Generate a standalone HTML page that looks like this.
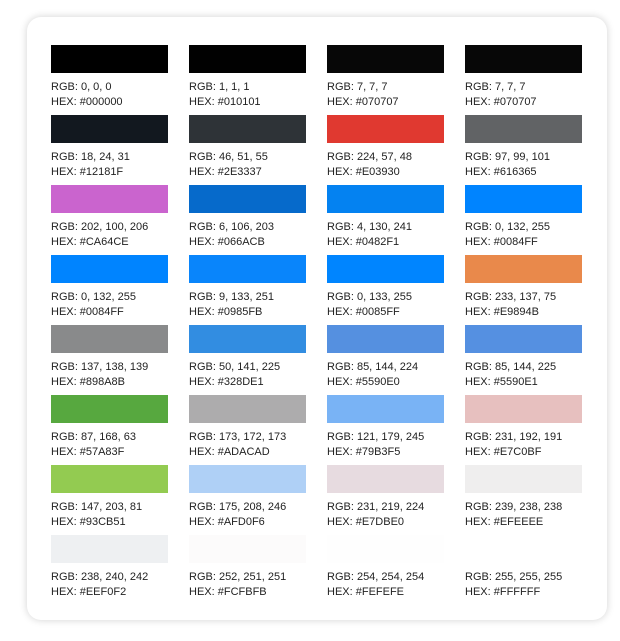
<!DOCTYPE html>
<html><head><meta charset="utf-8"><style>
body{margin:0;background:#fff;width:620px;height:641px;overflow:hidden;font-family:"Liberation Sans",Arial,sans-serif}
.card{position:absolute;left:27px;top:17px;width:580px;height:603px;background:#fff;border-radius:14px;box-shadow:0 0 8px rgba(0,0,0,.18)}
.grid{position:absolute;left:24px;top:28px;display:grid;grid-template-columns:repeat(4,117px);column-gap:21px;row-gap:0}
.c{height:70px}
.s{height:28px}
.t{font-size:11px;line-height:15px;color:#222;margin-top:7px}
</style></head><body><div class="card"><div class="grid">
<div class="c"><div class="s" style="background:#000000"></div><div class="t">RGB: 0, 0, 0<br>HEX: #000000</div></div>
<div class="c"><div class="s" style="background:#010101"></div><div class="t">RGB: 1, 1, 1<br>HEX: #010101</div></div>
<div class="c"><div class="s" style="background:#070707"></div><div class="t">RGB: 7, 7, 7<br>HEX: #070707</div></div>
<div class="c"><div class="s" style="background:#070707"></div><div class="t">RGB: 7, 7, 7<br>HEX: #070707</div></div>
<div class="c"><div class="s" style="background:#12181F"></div><div class="t">RGB: 18, 24, 31<br>HEX: #12181F</div></div>
<div class="c"><div class="s" style="background:#2E3337"></div><div class="t">RGB: 46, 51, 55<br>HEX: #2E3337</div></div>
<div class="c"><div class="s" style="background:#E03930"></div><div class="t">RGB: 224, 57, 48<br>HEX: #E03930</div></div>
<div class="c"><div class="s" style="background:#616365"></div><div class="t">RGB: 97, 99, 101<br>HEX: #616365</div></div>
<div class="c"><div class="s" style="background:#CA64CE"></div><div class="t">RGB: 202, 100, 206<br>HEX: #CA64CE</div></div>
<div class="c"><div class="s" style="background:#066ACB"></div><div class="t">RGB: 6, 106, 203<br>HEX: #066ACB</div></div>
<div class="c"><div class="s" style="background:#0482F1"></div><div class="t">RGB: 4, 130, 241<br>HEX: #0482F1</div></div>
<div class="c"><div class="s" style="background:#0084FF"></div><div class="t">RGB: 0, 132, 255<br>HEX: #0084FF</div></div>
<div class="c"><div class="s" style="background:#0084FF"></div><div class="t">RGB: 0, 132, 255<br>HEX: #0084FF</div></div>
<div class="c"><div class="s" style="background:#0985FB"></div><div class="t">RGB: 9, 133, 251<br>HEX: #0985FB</div></div>
<div class="c"><div class="s" style="background:#0085FF"></div><div class="t">RGB: 0, 133, 255<br>HEX: #0085FF</div></div>
<div class="c"><div class="s" style="background:#E9894B"></div><div class="t">RGB: 233, 137, 75<br>HEX: #E9894B</div></div>
<div class="c"><div class="s" style="background:#898A8B"></div><div class="t">RGB: 137, 138, 139<br>HEX: #898A8B</div></div>
<div class="c"><div class="s" style="background:#328DE1"></div><div class="t">RGB: 50, 141, 225<br>HEX: #328DE1</div></div>
<div class="c"><div class="s" style="background:#5590E0"></div><div class="t">RGB: 85, 144, 224<br>HEX: #5590E0</div></div>
<div class="c"><div class="s" style="background:#5590E1"></div><div class="t">RGB: 85, 144, 225<br>HEX: #5590E1</div></div>
<div class="c"><div class="s" style="background:#57A83F"></div><div class="t">RGB: 87, 168, 63<br>HEX: #57A83F</div></div>
<div class="c"><div class="s" style="background:#ADACAD"></div><div class="t">RGB: 173, 172, 173<br>HEX: #ADACAD</div></div>
<div class="c"><div class="s" style="background:#79B3F5"></div><div class="t">RGB: 121, 179, 245<br>HEX: #79B3F5</div></div>
<div class="c"><div class="s" style="background:#E7C0BF"></div><div class="t">RGB: 231, 192, 191<br>HEX: #E7C0BF</div></div>
<div class="c"><div class="s" style="background:#93CB51"></div><div class="t">RGB: 147, 203, 81<br>HEX: #93CB51</div></div>
<div class="c"><div class="s" style="background:#AFD0F6"></div><div class="t">RGB: 175, 208, 246<br>HEX: #AFD0F6</div></div>
<div class="c"><div class="s" style="background:#E7DBE0"></div><div class="t">RGB: 231, 219, 224<br>HEX: #E7DBE0</div></div>
<div class="c"><div class="s" style="background:#EFEEEE"></div><div class="t">RGB: 239, 238, 238<br>HEX: #EFEEEE</div></div>
<div class="c"><div class="s" style="background:#EEF0F2"></div><div class="t">RGB: 238, 240, 242<br>HEX: #EEF0F2</div></div>
<div class="c"><div class="s" style="background:#FCFBFB"></div><div class="t">RGB: 252, 251, 251<br>HEX: #FCFBFB</div></div>
<div class="c"><div class="s" style="background:#FEFEFE"></div><div class="t">RGB: 254, 254, 254<br>HEX: #FEFEFE</div></div>
<div class="c"><div class="s" style="background:#FFFFFF"></div><div class="t">RGB: 255, 255, 255<br>HEX: #FFFFFF</div></div>
</div></div></body></html>
